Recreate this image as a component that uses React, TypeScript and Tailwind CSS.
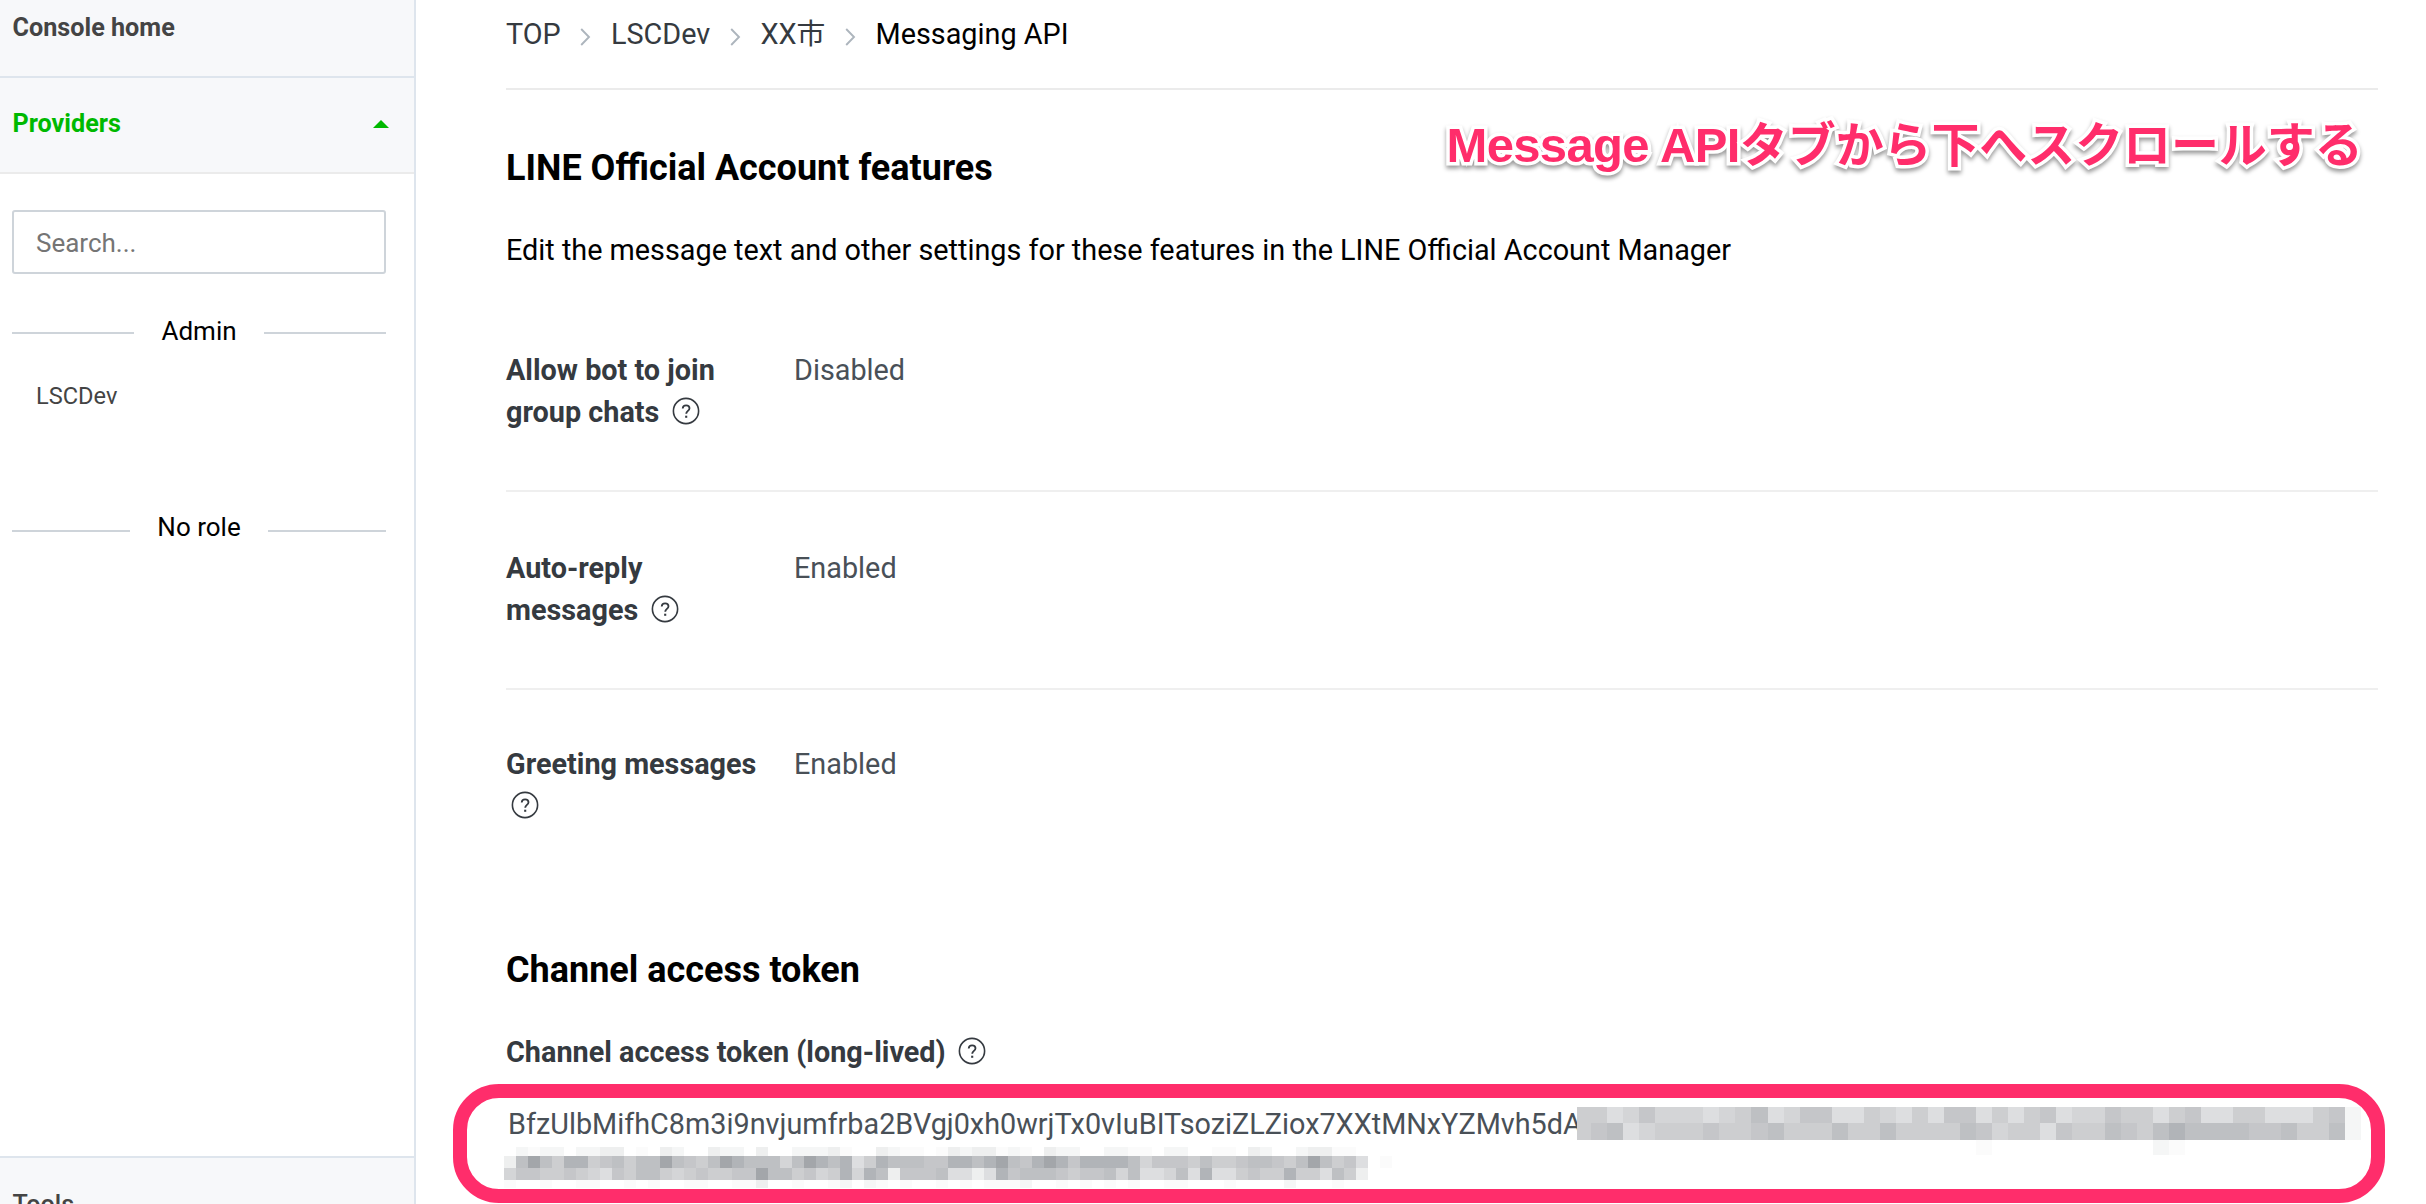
import React from "react";

const SHADES: Record<string, string> = {
  a: "#a3a6aa", b: "#b1b4b8", c: "#bec0c3", d: "#c5c6c9", e: "#cdced0",
  f: "#d4d5d7", g: "#dddee0", h: "#eeefef", i: "#f5f6f6", j: "#fbfbfb", ".": "#ffffff",
};

function MosaicRow({ cells, cell, h, first }: { cells: string; cell: number; h: number; first?: number }) {
  return (
    <div className="flex" style={{ height: h }}>
      {cells.split("").map((c, i) => (
        <span key={i} className="shrink-0" style={{ width: i === 0 && first ? first : cell, background: SHADES[c] }} />
      ))}
    </div>
  );
}

function Help({ className = "" }: { className?: string }) {
  return (
    <svg className={"h-[28px] w-[28px] shrink-0 " + className} viewBox="0 0 28 28" fill="none" stroke="#353a40">
      <circle cx="14" cy="14" r="12.6" strokeWidth="1.6" />
      <path d="M10.7 11.5c.1-2 1.5-3.2 3.4-3.2s3.4 1.2 3.4 2.9c0 2.6-3.3 2.8-3.3 5.6" strokeWidth="1.8" />
      <path d="M14.2 18.7v2.1" strokeWidth="2.1" />
    </svg>
  );
}

function Chevron() {
  return (
    <svg className="mt-[6px] h-[18px] w-[11px]" viewBox="0 0 11 18" fill="none" stroke="#adb5bd" strokeWidth="1.9">
      <path d="M1.2 1L9 9l-7.800 8" />
    </svg>
  );
}

function Divider({ label, lift }: { label: string; lift: string }) {
  return (
    <div className="flex h-[40px] items-center gap-[27.5px] text-[26px] leading-[40px] text-black">
      <span className="mt-[2px] h-[2px] flex-1 bg-[#ced4da]" />
      <span className={lift}>{label}</span>
      <span className="mt-[2px] h-[2px] flex-1 bg-[#ced4da]" />
    </div>
  );
}

function Feature({ label, last, value, height }: { label: string; last: string; value: string; height: string }) {
  return (
    <div className={"flex text-[28.8px] leading-[42px] " + height}>
      <div className="w-[288px] shrink-0 font-bold text-[#353a40]">
        <div className="whitespace-nowrap">{label}</div>
        <div className="flex">
          {last && <span className="mr-[8px]">{last}</span>}
          <Help className="ml-[5px] mt-[6px]" />
        </div>
      </div>
      <div className="text-[#495057]">{value}</div>
    </div>
  );
}

export default function App() {
  return (
    <div className="flex h-[1204px] w-[2426px] overflow-hidden bg-white font-['Roboto','Noto_Sans_CJK_JP',sans-serif]">
      <aside className="flex w-[416px] shrink-0 flex-col border-r-2 border-[#dee5ed]">
        <div className="h-[78px] border-b-2 border-[#dee5ed] bg-[#f7f8fa] pl-[12.5px] pt-[8px] text-[25.2px] font-bold leading-[40px] text-[#444]">
          Console home
        </div>
        <div className="flex h-[96px] items-center justify-between border-b-2 border-[#ebebeb] bg-[#f7f8fa] pb-[3px] pl-[12.5px] pr-[25px] text-[25.2px] font-bold leading-[40px] text-[#00b900]">
          <span>Providers</span>
          <svg className="h-[8px] w-[16px]" viewBox="0 0 16 8" fill="#00b900"><path d="M0 8L8 0l8 8z" /></svg>
        </div>
        <div className="flex-1 pl-[12px] pr-[28px] pt-[36px]">
          <div className="h-[64px] rounded-[3px] border-2 border-[#ced4da] pl-[22px] text-[26px] leading-[62px] text-[#757575]">
            Search...
          </div>
          <div className="mt-[38px]"><Divider label="Admin" lift="mb-[2px]" /></div>
          <div className="mt-[24px] pl-[24px] text-[23.6px] leading-[40px] text-[#444]">LSCDev</div>
          <div className="mt-[94px]"><Divider label="No role" lift="mb-[6px]" /></div>
        </div>
        <div className="h-[48px] shrink-0 border-t-2 border-[#dee5ed] bg-[#f7f8fa] pl-[12.5px] pt-[27px] text-[25.2px] font-medium leading-[40px] text-[#444]">
          Tools
        </div>
      </aside>

      <main className="relative w-[1962px] shrink-0 pl-[90px]">
        <nav className="flex h-[90px] items-center gap-[19.6px] border-b-2 border-[#ebebeb] pb-[20px] text-[28.8px] leading-[42px] text-[#353a40]">
          <span>TOP</span><Chevron />
          <span>LSCDev</span><Chevron />
          <span>XX<span className="text-[28.8px]">市</span></span><Chevron />
          <span className="text-black">Messaging API</span>
        </nav>
        <h1 className="mt-[51px] text-[36px] font-bold leading-[54px] text-black">LINE Official Account features</h1>
        <p className="mt-[34px] text-[28.8px] leading-[42px] text-black">
          Edit the message text and other settings for these features in the LINE Official Account Manager
        </p>
        <section className="mt-[78px]">
          <div className="border-b-2 border-[#efefef]">
            <Feature label="Allow bot to join" last="group chats" value="Disabled" height="h-[141px]" />
          </div>
          <div className="border-b-2 border-[#efefef] pt-[55px]">
            <Feature label="Auto-reply" last="messages" value="Enabled" height="h-[141px]" />
          </div>
          <div className="pt-[53px]">
            <Feature label="Greeting messages" last="" value="Enabled" height="h-[84px]" />
          </div>
        </section>
        <h2 className="mt-[116px] text-[36px] font-bold leading-[54px] text-black">Channel access token</h2>
        <div className="mt-[34px] flex text-[28.8px] font-bold leading-[42px] text-[#353a40]">
          Channel access token (long-lived)
          <Help className="ml-[12px] mt-[6px]" />
        </div>
        <div className="relative mt-[11px] h-[119px]">
          <div className="flex pl-[2px] pt-[19px]">
            <div className="w-[1069px] shrink-0 whitespace-nowrap text-[28.8px] leading-[42px] text-[#495057]">
              BfzUlbMifhC8m3i9nvjumfrba2BVgj0xh0wrjTx0vIuBITsoziZLZiox7XXtMNxYZMvh5dA
            </div>
            <div className="relative mt-[4px] w-[785px] shrink-0">
              <MosaicRow first={14} cell={16.06} h={16} cells="eegfdfffgfecgfddggefgegddgegedgffdeegedggeegggedi" />
              <MosaicRow first={14} cell={16.06} h={17} cells="edcgfeeedeedceeeceeceeeecdfeegdeecdecbccccddceeci" />
              <MosaicRow first={14} cell={16.06} h={15} cells=".........................j..........ij..........." />
            </div>
          </div>
          <div className="absolute -left-[53px] top-0 h-[119px] w-[1932px] rounded-[46px] border-[14px] border-[#ff2d6b]" />
        </div>
        <div className="absolute left-[88px] top-[1147px]">
          <MosaicRow cell={12} h={9} cells=".ijii.iihh.j.hi..hii.h..iiihj..hijj.jhihhjij.hii..iijj.ii..jj.hi..ihhjj." />
          <MosaicRow cell={12} h={12} cells="hcacebbedceccacdecabcccfcabcbgebcccddbbcbacdbabdbbbbcfdddeceedccdecacedg.j" />
          <MosaicRow cell={12} h={12} cells="fddeedefgdeccefedeeddaccedfebfbchdddcgghgbdcccdeddcfcggfcgbggedeebeegceh" />
          <MosaicRow cell={12} h={8} cells="j..j..jj..j.j..jj..jjh..j..ji.ij.j..j.j.jjji..j.j.j.j..jj...j....i...j.." />
        </div>
        <div className="absolute left-[1030.5px] top-[117px] whitespace-nowrap font-['Liberation_Sans','Noto_Sans_CJK_JP',sans-serif] text-[49px] font-bold leading-[56px] tracking-[-0.65px] text-[#ff2d6b] [paint-order:stroke_fill] [-webkit-text-stroke:7px_white] [filter:drop-shadow(0_3px_2px_rgba(0,0,0,.4))]">
          Message API<span className="text-[48px] tracking-[-0.1px]">タブから下へスクロールする</span>
        </div>
      </main>
    </div>
  );
}
